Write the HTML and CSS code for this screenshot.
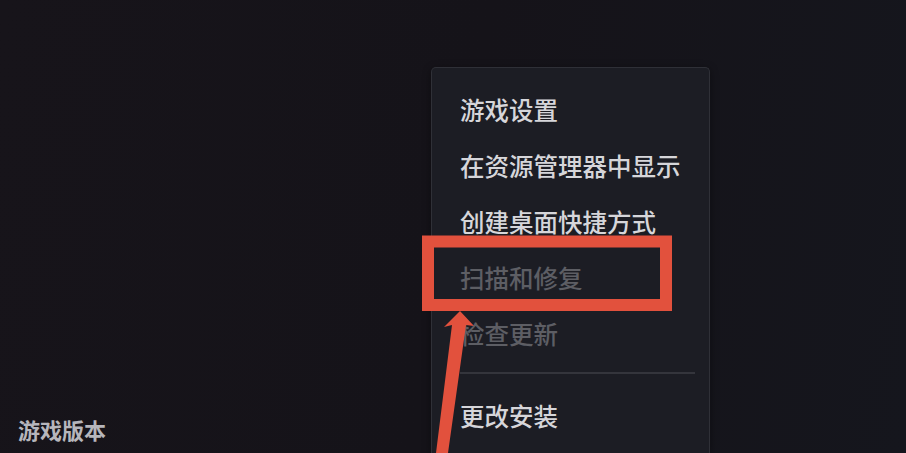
FILE: index.html
```html
<!DOCTYPE html>
<html lang="zh-CN">

<head>
  <meta charset="UTF-8">
  <title>游戏菜单</title>
  <link rel="stylesheet" href="styles.css">
</head>

<body>
  <div class="page">
    <div class="footer">
      <span class="version-label">游戏版本</span>
    </div>

    <div class="context-menu">
      <div class="menu-item">游戏设置</div>
      <div class="menu-item">在资源管理器中显示</div>
      <div class="menu-item">创建桌面快捷方式</div>
      <div class="menu-item disabled">扫描和修复</div>
      <div class="menu-item disabled">检查更新</div>
      <div class="menu-divider"></div>
      <div class="menu-item">更改安装</div>
    </div>

    <!-- annotation: highlight box + arrow -->
    <svg class="annotation" width="906" height="453" viewBox="0 0 906 453">
      <rect x="428" y="241.5" width="238" height="63.5" fill="none" stroke="#e2513d" stroke-width="12"></rect>
      <polygon points="460,311 474,326 466,325 448,453 436,453 452,325 444,327" fill="#e2513d"></polygon>
    </svg>
  </div>
</body>

</html>
```

FILE: styles.css
```css
body {
  margin: 0;
  overflow: hidden;
  font-family: "Noto Sans CJK SC", "Noto Sans", sans-serif;
  background-color: #15141a;
}

.page {
  position: relative;
  height: 453px;
  display: flex;
  flex-direction: column;
  justify-content: flex-end;
  background: linear-gradient(100deg, #17141a 0%, #151319 50%, #15161d 100%);
}

.footer {
  padding: 0 0 8px 18px;
}

.version-label {
  font-size: 22px;
  font-weight: bold;
  color: #b6b6bc;
}

.context-menu {
  position: absolute;
  left: 431px;
  top: 67px;
  width: 277px;
  height: 372px;
  padding-top: 14px;
  background-color: #1c1d24;
  border: 1px solid #2f3037;
  border-bottom: none;
  border-radius: 5px 5px 0 0;
  box-shadow: 0 2px 8px rgba(0, 0, 0, 0.4);
}

.menu-item {
  height: 56px;
  line-height: 56px;
  padding-left: 28px;
  font-size: 24.5px;
  font-weight: 500;
  color: #d6d6da;
  white-space: nowrap;
}

.menu-item.disabled {
  color: #5d5e64;
}

.menu-divider {
  height: 2px;
  margin: 10px 14px 14px 28px;
  background-color: #34353c;
}

.annotation {
  position: absolute;
  left: 0;
  top: 0;
}
```
